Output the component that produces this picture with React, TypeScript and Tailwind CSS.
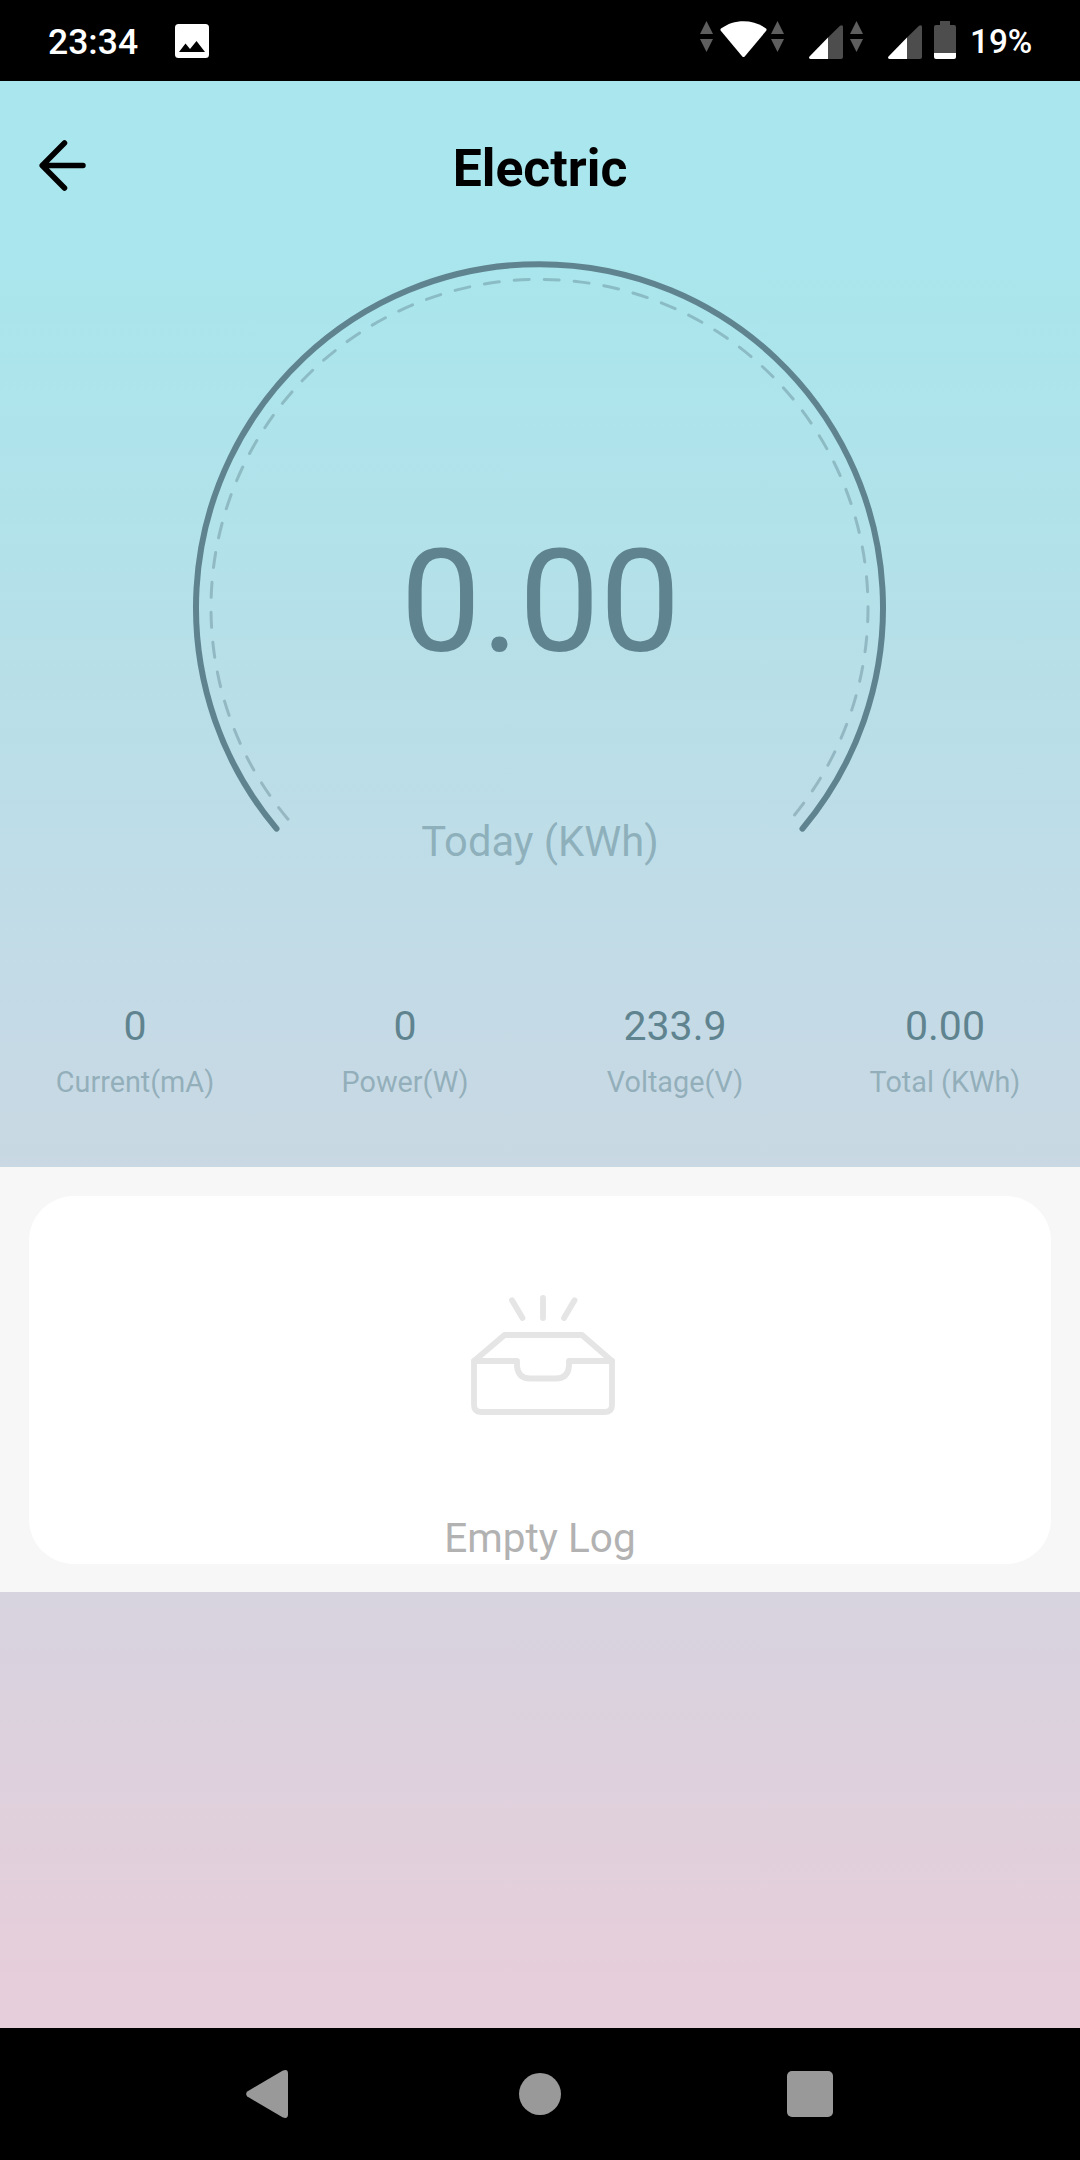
const stats = [
  { value: "0", label: "Current(mA)" },
  { value: "0", label: "Power(W)" },
  { value: "233.9", label: "Voltage(V)" },
  { value: "0.00", label: "Total (KWh)" },
];

export default function App() {
  return (
    <div className="flex flex-col w-[1080px] h-[2160px] overflow-hidden font-['Roboto',sans-serif]">
      <StatusBar />
      <main className="flex flex-col h-[1947px] bg-[linear-gradient(180deg,#a9e6ed_0%,#a9e6ed_8%,#b1e2ea_22%,#b8dfe8_31%,#c3dbe7_46%,#c9d8e2_56%,#d7d3df_78%,#e6ceda_98%,#e6ceda_100%)]">
        <Header />
        <Gauge />
        <div className="grid grid-cols-4 h-[207px] pt-[38px] text-center">
          {stats.map((stat) => (
            <div key={stat.label}>
              <div className="h-14 leading-14 text-[41px] text-[#5f8490]">{stat.value}</div>
              <div className="mt-2 h-10 leading-10 text-[28.8px] text-[#5f8490]/50">{stat.label}</div>
            </div>
          ))}
        </div>
        <EmptyLog />
      </main>
      <NavBar />
    </div>
  );
}

function StatusBar() {
  return (
    <div className="flex items-start h-[81px] bg-black text-white font-medium text-[35.5px]">
      <span className="ml-12 w-[90px] h-[81px] leading-[85px]">23:34</span>
      <svg className="ml-[37px] mt-6" width="34" height="34" viewBox="0 0 34 34">
        <rect width="34" height="34" rx="3.5" fill="#fff" />
        <path d="M4 28L10.5 19.5L15 25L21.5 17L30 28Z" fill="#000" />
      </svg>
      <div className="flex items-start ml-auto mt-[21px] mr-[49px]">
        <DataArrows />
        <svg className="ml-[7px]" width="47" height="37" viewBox="0 0 47 37">
          <path d="M1 7.5C14 -2.3 33 -2.3 46 7.5Q47 8.600 46.200 9.800L24.700 35.500Q23.500 36.700 22.300 35.500L.8 9.800Q0 8.600 1 7.500Z" fill="#fff" />
        </svg>
        <div className="ml-1"><DataArrows /></div>
        <div className="ml-[25px] mt-1"><Signal /></div>
        <div className="ml-[7px]"><DataArrows /></div>
        <div className="ml-[25px] mt-1"><Signal /></div>
        <svg className="ml-3" width="22" height="38" viewBox="0 0 22 38">
          <path d="M6 0H16V4H20Q22 4 22 6V32H0V6Q0 4 2 4H6Z" fill="#4d4d4d" />
          <path d="M0 32H22V36Q22 38 20 38H2Q0 38 0 36Z" fill="#fff" />
        </svg>
        <span className="ml-3.5 w-[61px] h-10 leading-[41px] text-[33.3px]">19%</span>
      </div>
    </div>
  );
}

function DataArrows() {
  return (
    <svg width="13" height="31" viewBox="0 0 13 31" fill="#5e5e5e">
      <path d="M6.500 0L13 13H0Z" />
      <path d="M0 18H13L6.500 31Z" />
    </svg>
  );
}

function Signal() {
  return (
    <svg width="34" height="34" viewBox="0 0 34 34">
      <path d="M19 12.500L31 .8Q34 -.8 34 2V32Q34 34 32 34H19Z" fill="#4d4d4d" />
      <path d="M19 12.500V34H1.500Q-.8 33.500 .5 31.500Z" fill="#fff" />
    </svg>
  );
}

function Header() {
  return (
    <header className="grid grid-cols-[1fr_auto_1fr] items-center h-[172px] px-[39px]">
      <button className="outline-none">
        <svg width="47" height="51" viewBox="0 0 47 51" className="-mt-[3px]" fill="none" stroke="#000" strokeWidth="5.500" strokeLinecap="round" strokeLinejoin="round">
          <path d="M25.500 3L3.200 25.500L25.500 48M3.200 25.500H44" />
        </svg>
      </button>
      <h1 className="pt-[3px] text-[51.7px] leading-[60px] font-bold text-black">Electric</h1>
    </header>
  );
}

function Gauge() {
  return (
    <section className="grid h-[707px] [&>*]:col-start-1 [&>*]:row-start-1">
      <svg width="1080" height="707" viewBox="0 253 1080 707" fill="none" strokeLinecap="round">
        <path d="M276.500 828.600A343.500 343.500 0 1 1 802.500 828.600" stroke="#5f8490" strokeWidth="6" />
        <path d="M288 819.200A328.500 328.500 0 1 1 791 819.200" stroke="#5f8490" strokeOpacity=".42" strokeWidth="3" strokeDasharray="15 15" />
      </svg>
      <div className="flex flex-col items-center pt-[269px]">
        <div className="h-40 leading-40 pl-px text-[143.6px] text-[#5f8490]">0.00</div>
        <div className="mt-[130px] h-15 leading-15 text-[41.7px] text-[#5f8490]/50">Today (KWh)</div>
      </div>
    </section>
  );
}

function EmptyLog() {
  return (
    <section className="h-[425px] px-[29px] py-[29px] bg-[#f7f7f7]">
      <div className="flex flex-col items-center h-[368px] rounded-[45px] bg-white">
        <svg className="mt-[97px] ml-1.5" width="148" height="124" viewBox="469 1293 148 124" fill="none" stroke="#e5e5e5" strokeWidth="5.800" strokeLinecap="round" strokeLinejoin="round">
          <path d="M512 1300.300L522.500 1318M543 1298V1318M574.500 1300.300L564 1318" />
          <path d="M474 1361L504.500 1335H582L612 1361V1405Q612 1412 605 1412H481Q474 1412 474 1405Z" />
          <path d="M474 1361H517V1366Q518 1378.500 530 1378.500H556Q568 1378.500 569 1366V1361H612" />
        </svg>
        <div className="mt-[95px] h-13 leading-13 text-[40.5px] text-[#b2b2b2]">Empty Log</div>
      </div>
    </section>
  );
}

function NavBar() {
  return (
    <nav className="flex items-center h-[132px] pl-[246px] bg-black">
      <svg width="42" height="48" viewBox="0 0 42 48">
        <path d="M36.500 .7Q42 -1.500 42 3.500V44.500Q42 49.500 36.500 47.300L1.300 26.500Q-1 24 1.300 21.500Z" fill="#999" />
      </svg>
      <div className="ml-[231px] size-[42px] rounded-full bg-[#999]" />
      <div className="ml-[226px] size-[46px] rounded-[5px] bg-[#999]" />
    </nav>
  );
}
